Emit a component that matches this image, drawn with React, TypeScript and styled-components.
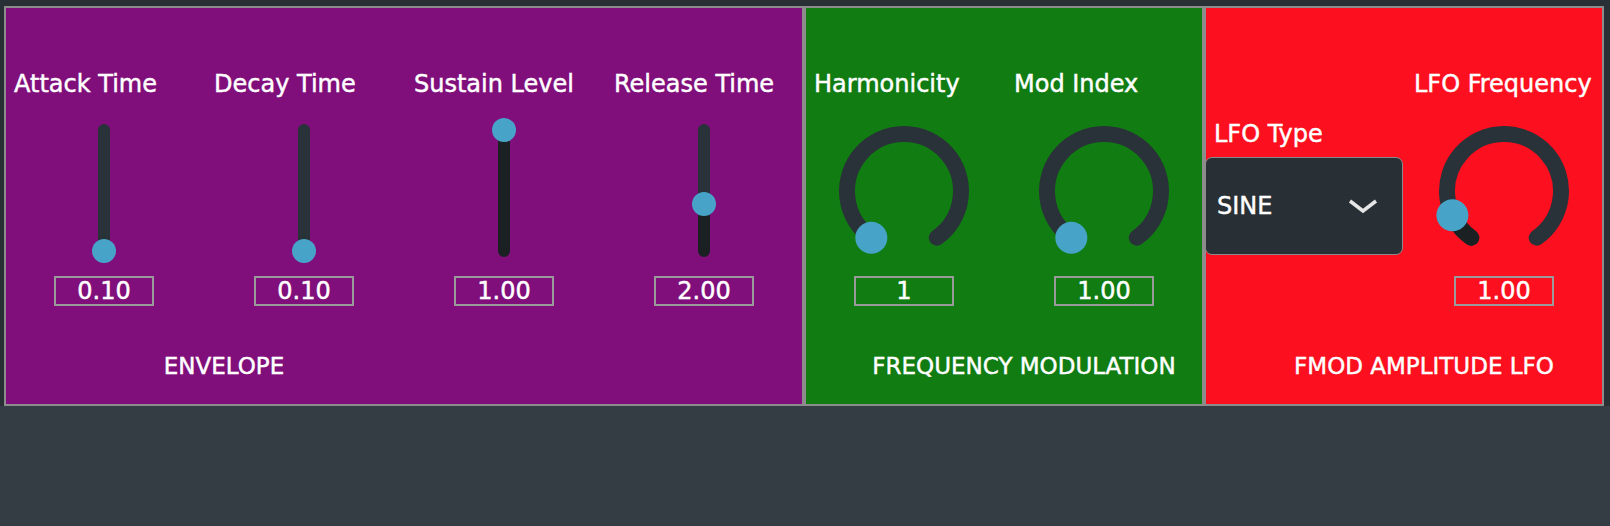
import styled, { createGlobalStyle } from "styled-components";

const GlobalStyle = createGlobalStyle`
  html, body {
    margin: 0;
    padding: 0;
    background: #343d43;
  }
  body {
    font-family: "DejaVu Sans", "Liberation Sans", sans-serif;
    color: #ffffff;
  }
`;

const Page = styled.div`
  min-height: 526px;
  background: #343d43;
`;

const Rack = styled.div`
  display: flex;
  padding: 6px 6px 0 4px;
  background: #283036;
`;

const Panel = styled.section<{ $bg: string; $width: number }>`
  width: ${(p) => p.$width}px;
  height: 400px;
  flex-shrink: 0;
  display: flex;
  flex-direction: column;
  background: ${(p) => p.$bg};
  box-shadow: inset 0 0 0 2px #8c8c8c;
  -webkit-text-stroke: 0.45px #ffffff;
`;

const Controls = styled.div`
  display: flex;
  height: 300px;
  padding-top: 64px;
  box-sizing: border-box;
`;

const Column = styled.div`
  width: 200px;
  display: flex;
  flex-direction: column;
  align-items: center;
`;

const Label = styled.div<{ $drop?: number }>`
  align-self: stretch;
  margin-top: ${(p) => p.$drop ?? 0}px;
  padding-left: 10px;
  height: 28px;
  font-size: 24px;
  line-height: 28px;
  white-space: nowrap;
`;

const ControlArea = styled.div`
  height: 170px;
  width: 100%;
  display: flex;
  justify-content: center;
  align-items: flex-start;
`;

const Track = styled.div<{ $fill: number }>`
  position: relative;
  margin-top: 26px;
  width: 12px;
  height: 133px;
  border-radius: 6px;
  background: linear-gradient(
    to top,
    #1b2023 ${(p) => p.$fill}%,
    #293238 ${(p) => p.$fill}%
  );
`;

const Thumb = styled.div`
  position: absolute;
  left: -6px;
  width: 24px;
  height: 24px;
  border-radius: 50%;
  background: #47a4c8;
`;

const ValueBox = styled.div`
  margin-top: 8px;
  width: 100px;
  height: 30px;
  box-sizing: border-box;
  border: 2px solid #9a9a9a;
  text-align: center;
  font-size: 24px;
  line-height: 26px;
`;

const DialSvg = styled.svg`
  margin-top: 18px;
`;

const SelectBox = styled.div`
  margin-top: 9px;
  width: 198px;
  height: 98px;
  box-sizing: border-box;
  display: flex;
  align-items: center;
  justify-content: space-between;
  padding: 0 23px 0 11px;
  background: #283036;
  border: 1.5px solid #8a8a8a;
  border-radius: 7px;
  font-size: 24px;
`;

const Footer = styled.div`
  margin-top: 47px;
  width: 400px;
  box-sizing: border-box;
  padding-left: 40px;
  text-align: center;
  font-size: 23px;
  line-height: 26px;
  white-space: nowrap;
`;

// slider: frac 0 = bottom, 1 = top
function Slider({ label, value, frac }: { label: string; value: string; frac: number }) {
  const top = 6 + (1 - frac) * 121;
  const fill = ((133 - top) / 133) * 100;
  return (
    <Column>
      <Label>{label}</Label>
      <ControlArea>
        <Track $fill={frac > 0 ? fill : 0}>
          <Thumb style={{ top: top - 12 }} />
        </Track>
      </ControlArea>
      <ValueBox>{value}</ValueBox>
    </Column>
  );
}

function Dial({ label, value, frac }: { label: string; value: string; frac: number }) {
  const cx = 75;
  const cy = 75;
  const r = 57;
  const start = -145;
  const end = 145;
  const at = start + frac * (end - start);
  const pt = (deg: number) => {
    const rad = (deg * Math.PI) / 180;
    return [cx + r * Math.sin(rad), cy - r * Math.cos(rad)];
  };
  const arc = (a: number, b: number) => {
    const [x1, y1] = pt(a);
    const [x2, y2] = pt(b);
    const large = b - a > 180 ? 1 : 0;
    return `M ${x1} ${y1} A ${r} ${r} 0 ${large} 1 ${x2} ${y2}`;
  };
  const [dx, dy] = pt(at);
  return (
    <Column>
      <Label>{label}</Label>
      <ControlArea>
        <DialSvg width={150} height={150} viewBox="0 0 150 150">
          <path d={arc(start, end)} fill="none" stroke="#293238" strokeWidth={16} strokeLinecap="round" />
          {frac > 0.001 && (
            <path d={arc(start, at)} fill="none" stroke="#1b2023" strokeWidth={16} strokeLinecap="round" />
          )}
          <circle cx={dx} cy={dy} r={16} fill="#47a4c8" />
        </DialSvg>
      </ControlArea>
      <ValueBox>{value}</ValueBox>
    </Column>
  );
}

function Select({ label, value }: { label: string; value: string }) {
  return (
    <Column>
      <Label $drop={50}>{label}</Label>
      <SelectBox>
        <span>{value}</span>
        <svg width="32" height="16" viewBox="0 0 32 16">
          <polyline points="3,3 16,13 29,3" fill="none" stroke="#e6e6e6" strokeWidth={3.5} />
        </svg>
      </SelectBox>
    </Column>
  );
}

export default function App() {
  return (
    <Page>
      <GlobalStyle />
      <Rack>
        <Panel $bg="#810f7b" $width={800}>
          <Controls>
            <Slider label="Attack Time" value="0.10" frac={0} />
            <Slider label="Decay Time" value="0.10" frac={0} />
            <Slider label="Sustain Level" value="1.00" frac={1} />
            <Slider label="Release Time" value="2.00" frac={0.385} />
          </Controls>
          <Footer>ENVELOPE</Footer>
        </Panel>
        <Panel $bg="#107c12" $width={400}>
          <Controls>
            <Dial label="Harmonicity" value="1" frac={0} />
            <Dial label="Mod Index" value="1.00" frac={0} />
          </Controls>
          <Footer>FREQUENCY MODULATION</Footer>
        </Panel>
        <Panel $bg="#fc0f1e" $width={400}>
          <Controls>
            <Select label="LFO Type" value="SINE" />
            <Dial label="LFO Frequency" value="1.00" frac={0.103} />
          </Controls>
          <Footer>FMOD AMPLITUDE LFO</Footer>
        </Panel>
      </Rack>
    </Page>
  );
}
